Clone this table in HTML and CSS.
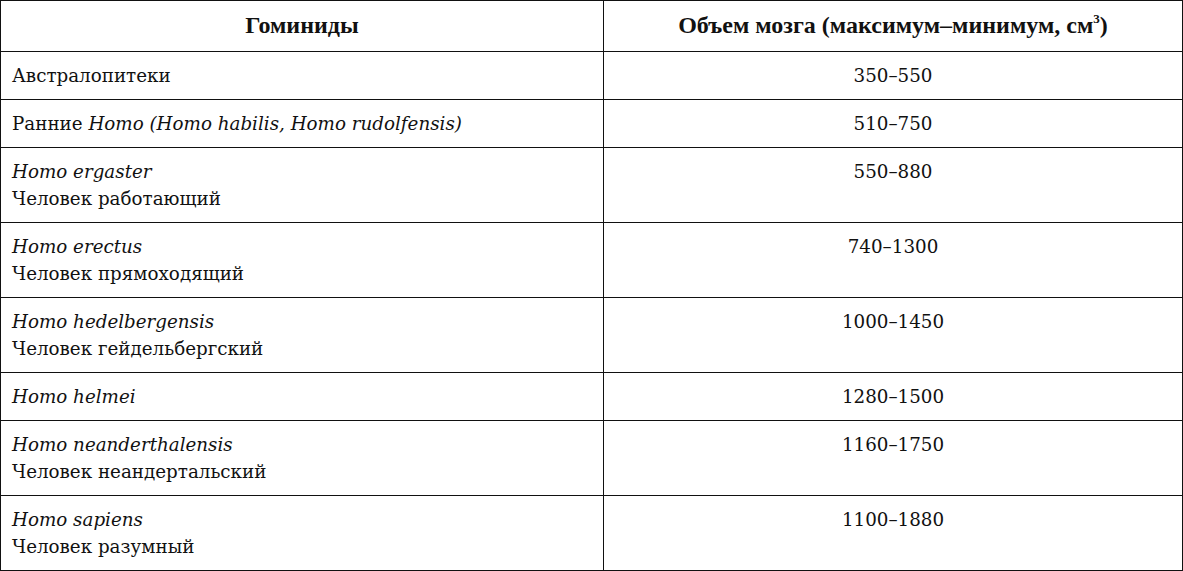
FILE: index.html
```html
<!DOCTYPE html>
<html lang="ru">
<head>
<meta charset="utf-8">
<link rel="stylesheet" href="styles.css">
</head>
<body>
<table class="grid">
  <colgroup><col class="c1"><col class="c2"></colgroup>
  <thead>
    <tr>
      <th class="h-left">Гоминиды</th>
      <th class="h-right">Объем мозга (максимум–минимум, см<sup>3</sup>)</th>
    </tr>
  </thead>
  <tbody>
    <tr><td>Австралопитеки</td><td class="num">350–550</td></tr>
    <tr><td>Ранние <i>Homo (Homo habilis, Homo rudolfensis)</i></td><td class="num">510–750</td></tr>
    <tr><td><i>Homo ergaster</i><br>Человек работающий</td><td class="num">550–880</td></tr>
    <tr><td><i>Homo erectus</i><br>Человек прямоходящий</td><td class="num">740–1300</td></tr>
    <tr><td><i>Homo hedelbergensis</i><br>Человек гейдельбергский</td><td class="num">1000–1450</td></tr>
    <tr><td><i>Homo helmei</i></td><td class="num">1280–1500</td></tr>
    <tr><td><i>Homo neanderthalensis</i><br>Человек неандертальский</td><td class="num">1160–1750</td></tr>
    <tr><td><i>Homo sapiens</i><br>Человек разумный</td><td class="num">1100–1880</td></tr>
  </tbody>
</table>
</body>
</html>
```
FILE: styles.css
```css
html, body { margin: 0; padding: 0; background: #fff; }
body { font-family: "DejaVu Serif", "Noto Sans", serif; color: #111; }
.grid {
  width: 1183px;
  border-collapse: collapse;
  table-layout: fixed;
  font-size: 18.3px;
  line-height: 27px;
}
.c1 { width: 603px; }
.grid th, .grid td {
  border: 1px solid #111;
  padding: 10px 11px;
  vertical-align: top;
  text-align: left;
}
.grid th {
  padding: 11px 11px 12px;
  text-align: center;
  font-family: "Liberation Serif", serif;
  font-weight: bold;
  font-size: 24px;
}
.grid th sup { font-size: 13px; line-height: 0; vertical-align: 10px; }
.grid td.num { text-align: center; }
```
